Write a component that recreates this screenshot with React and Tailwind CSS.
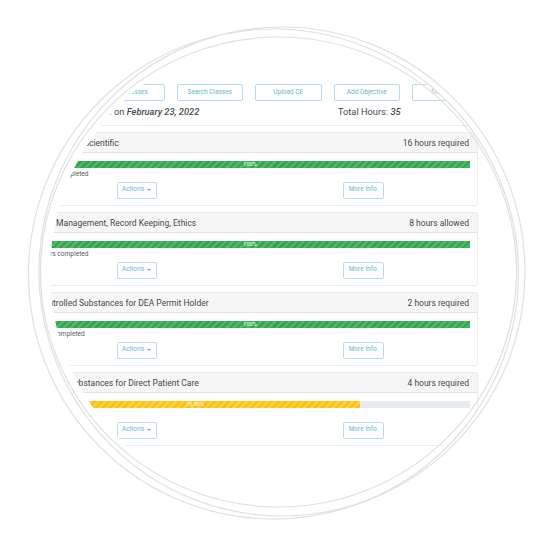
import React from 'react';

const topButtons = ['My Classes', 'Search Classes', 'Upload CE', 'Add Objective', 'Transcript'];

const objectives = [
  { title: 'Clinical and Scientific', note: '16 hours required', done: '16 hours completed', pct: 100, label: '100%', bar: 'green' },
  { title: 'Risk Management, Record Keeping, Ethics', note: '8 hours allowed', done: '12 hours completed', pct: 100, label: '100%', bar: 'green' },
  { title: 'Controlled Substances for DEA Permit Holder', note: '2 hours required', done: '2 hours completed', pct: 100, label: '100%', bar: 'green' },
  { title: 'Opioids Substances for Direct Patient Care', note: '4 hours required', done: '3 hours completed', pct: 75, label: '75.00%', bar: 'yellow' },
];

const OutlineButton = ({ children, className = '' }) => (
  <button className={`h-[17px] flex items-center justify-center gap-[3px] rounded-[2px] border-[1.5px] border-[#b4dcea] text-[6.5px] text-[#62b6d5] ${className}`}>
    {children}
  </button>
);

const ObjectiveCard = ({ item }) => (
  <div className="border border-[#ececec] rounded-[2px] h-[74px] text-[#45494d]">
    <div className="h-[20px] bg-[#f6f6f6] border-b border-[#e4e4e4] flex items-center justify-between pt-[1px] pl-[15px] pr-[8px] text-[8.5px]">
      <span>{item.title}</span>
      <span>{item.note}</span>
    </div>
    <div className="px-[7px] pt-[8px]">
      <div className="h-[6.5px] bg-[#e9ecef] flex">
        <div
          className={
            item.bar === 'green'
              ? 'h-full flex items-center justify-center text-[5.5px] leading-none font-medium text-white/80 bg-[repeating-linear-gradient(135deg,#2ea84b_0,#2ea84b_2.5px,#4fb668_2.5px,#4fb668_5px)]'
              : 'h-full flex items-center justify-center text-[5.5px] leading-none font-medium text-white/80 bg-[repeating-linear-gradient(135deg,#ffc107_0,#ffc107_2.5px,#ffcf3f_2.5px,#ffcf3f_5px)]'
          }
          style={{ width: `${item.pct}%` }}
        >
          {item.label}
        </div>
      </div>
      <div className="h-[13px] pt-[1px] text-[6.6px] leading-[10px] text-[#55595c]">{item.done}</div>
    </div>
    <div className="grid grid-cols-2 mt-[1px]">
      <div className="flex justify-center">
        <OutlineButton className="w-[40px]">
          Actions
          <span className="w-0 h-0 border-x-[2px] border-x-transparent border-t-[2px] border-t-[#62b6d5]" />
        </OutlineButton>
      </div>
      <div className="flex justify-center">
        <OutlineButton className="w-[41px]">More Info.</OutlineButton>
      </div>
    </div>
  </div>
);

export default function App() {
  return (
    <div className="relative w-[542px] h-[550px] bg-white overflow-hidden font-['Roboto',sans-serif]">
      <div className="pt-[37px] pl-[50px]">
        {/* round crop of the dashboard */}
        <div className="w-[470px] h-[470px] rounded-full overflow-hidden">
          <div className="-ml-[28px] w-[456px] pt-[47px]">
            <div className="flex gap-[12px] pl-[76px]">
              {topButtons.map((label) => (
                <OutlineButton key={label} className="w-[66.5px] shrink-0">{label}</OutlineButton>
              ))}
            </div>
            <div className="flex items-center h-[24px] pb-[2px] text-[9.25px] text-[#45494d]">
              <span className="w-[316px] pl-[6px]">
                License renewal due on <b className="italic font-medium">February 23, 2022</b>
              </span>
              <span>Total Hours: <b className="italic font-medium">35</b></span>
            </div>
            <div className="h-px bg-[#ececec] mb-[6px]" />
            <div className="flex flex-col gap-[6px]">
              {objectives.map((item) => (
                <ObjectiveCard key={item.title} item={item} />
              ))}
            </div>
          </div>
        </div>
      </div>
      {/* hand drawn looking rings on top of the crop */}
      <svg className="absolute inset-0" width="542" height="550" fill="none" stroke="#e0e0e0" strokeWidth="1.2">
        <ellipse cx="273.5" cy="274" rx="245" ry="245" />
        <ellipse cx="282" cy="271.5" rx="243" ry="244.5" />
        <ellipse cx="278.5" cy="272" rx="238" ry="235" />
      </svg>
    </div>
  );
}
